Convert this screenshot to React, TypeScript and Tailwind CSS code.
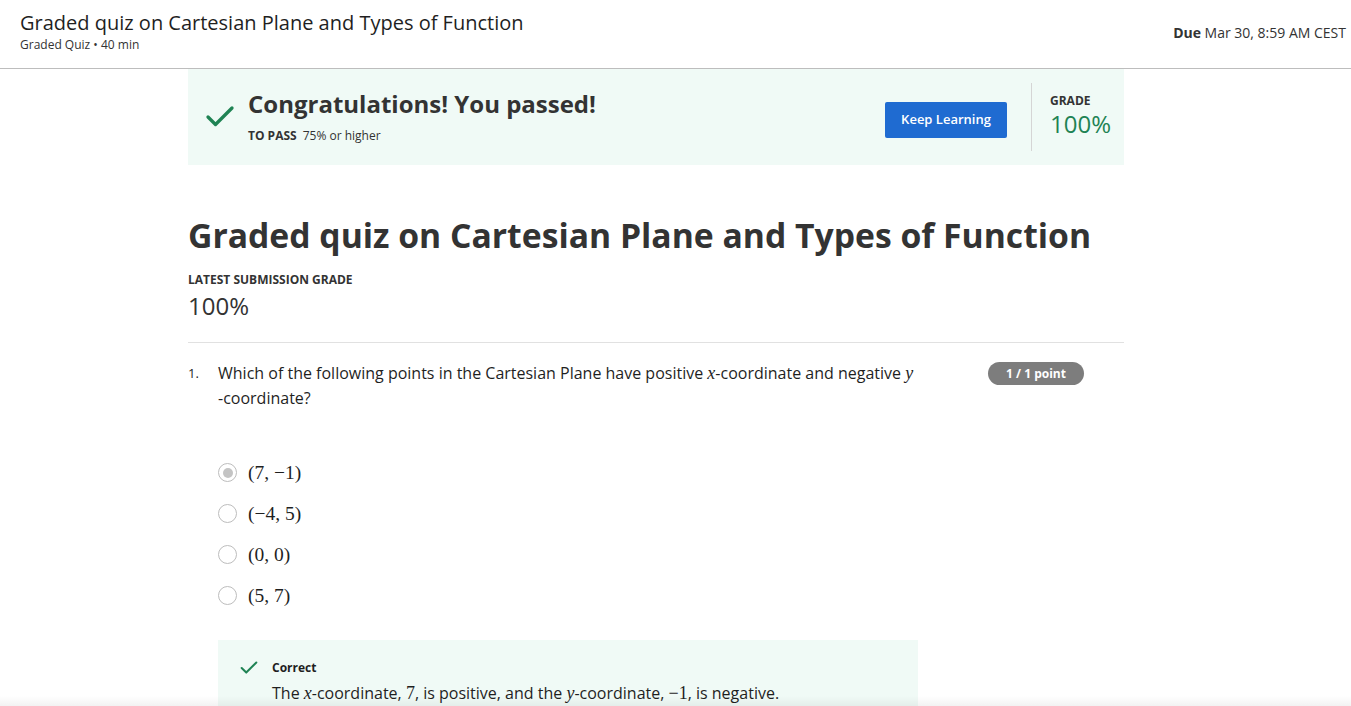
import { Check } from "lucide-react";

const sans = "font-['Open_Sans',sans-serif]";
const math = "font-['Liberation_Serif','DejaVu_Serif',serif]";

function M({ children }: { children: React.ReactNode }) {
  return <span className={`${math} text-[18px] italic`}>{children}</span>;
}

const OPTIONS = [
  { label: "(7, −1)", picked: true },
  { label: "(−4, 5)", picked: false },
  { label: "(0, 0)", picked: false },
  { label: "(5, 7)", picked: false },
];

export default function App() {
  return (
    <div className={`${sans} relative h-[706px] overflow-hidden bg-white text-[#1f1f1f]`}>
      {/* top bar */}
      <header className="flex h-[69px] items-start justify-between border-b border-[#bdbdbd] pl-5 pr-[5px] pt-[9px]">
        <div>
          <h1 className="text-[20px] leading-[28px] text-[#1f1f1f]">
            Graded quiz on Cartesian Plane and Types of Function
          </h1>
          <div className="text-[12px] leading-[16px] text-[#333]">Graded Quiz • 40 min</div>
        </div>
        <div className="pt-[13px] text-[14px] text-[#333]">
          <span className="font-bold">Due</span> Mar 30, 8:59 AM CEST
        </div>
      </header>

      <main className="ml-[188px] w-[936px]">
        {/* passed banner */}
        <section className="flex h-[96px] items-center bg-[#f0faf6] pl-[14px] pr-3">
          <Check className="mr-[10px] h-9 w-9 text-[#1f8354]" strokeWidth={2.2} />
          <div className="grow">
            <h2 className="text-[24px] font-bold leading-[30px] text-[#333]">
              Congratulations! You passed!
            </h2>
            <div className="mt-[8px] text-[12px] text-[#333]">
              <span className="mr-[6px] font-bold">TO PASS</span>75% or higher
            </div>
          </div>
          <button
            type="button"
            className="mr-6 mt-[6px] h-9 w-[122px] rounded-[2px] bg-[#1f6bd1] text-[13px] font-semibold text-white"
          >
            Keep Learning
          </button>
          <div className="h-[68px] w-px bg-[#d5d5d5]" />
          <div className="w-[80px] pl-[18px] pb-[4px]">
            <div className="text-[12px] font-bold text-[#333]">GRADE</div>
            <div className="text-[24px] leading-[28px] text-[#1f8354]">100%</div>
          </div>
        </section>

        {/* title */}
        <h2 className="mt-[46px] text-[33.7px] font-bold leading-[48px] text-[#333]">
          Graded quiz on Cartesian Plane and Types of Function
        </h2>
        <div className="mt-[12px] text-[12px] font-bold text-[#333]">LATEST SUBMISSION GRADE</div>
        <div className="mt-[1px] text-[24px] leading-[32px] text-[#333]">100%</div>
        <hr className="mt-[20px] border-[#e1e1e1]" />

        {/* question */}
        <div className="mt-[18px] flex items-start">
          <div className="w-[30px] pt-[3px] text-[13px]">1.</div>
          <p className="w-[710px] text-[16px] leading-[25px] text-[#1f1f1f]">
            Which of the following points in the Cartesian Plane have positive <M>x</M>-coordinate and
            negative <M>y</M>
            <br />
            -coordinate?
          </p>
          <div className="ml-[60px] mt-[1px] flex h-[23px] w-[96px] items-center justify-center rounded-full bg-[#7d7d7d] text-[12px] font-bold text-white">
            1 / 1 point
          </div>
        </div>

        <div className="mt-[51px] ml-[30px] flex flex-col gap-[20px]">
          {OPTIONS.map((o) => (
            <div key={o.label} className="flex h-[21px] items-center gap-[11px]">
              <span className="flex h-[19px] w-[19px] items-center justify-center rounded-full border-[1.5px] border-[#bdbdbd]">
                {o.picked && <span className="h-[10px] w-[10px] rounded-full bg-[#c4c4c4]" />}
              </span>
              <span className={`${math} text-[19.5px] text-[#1f1f1f]`}>{o.label}</span>
            </div>
          ))}
        </div>

        {/* feedback */}
        <div className="mt-[34px] ml-[30px] w-[700px] bg-[#f0faf6] px-5 pt-[17px] pb-4">
          <div className="flex items-center gap-[12px]">
            <Check className="h-[22px] w-[22px] text-[#1f8354]" strokeWidth={2.2} />
            <span className="text-[12px] font-bold">Correct</span>
          </div>
          <p className="mt-[2px] pl-[34px] text-[16px] leading-[24px]">
            The <M>x</M>-coordinate, <span className={`${math} text-[18px]`}>7</span>, is positive, and
            the <M>y</M>-coordinate, <span className={`${math} text-[18px]`}>−1</span>, is negative.
          </p>
        </div>
      </main>

      {/* page bottom shadow */}
      <div className="pointer-events-none absolute inset-x-0 bottom-0 h-[10px] bg-gradient-to-b from-transparent to-black/5" />
    </div>
  );
}
